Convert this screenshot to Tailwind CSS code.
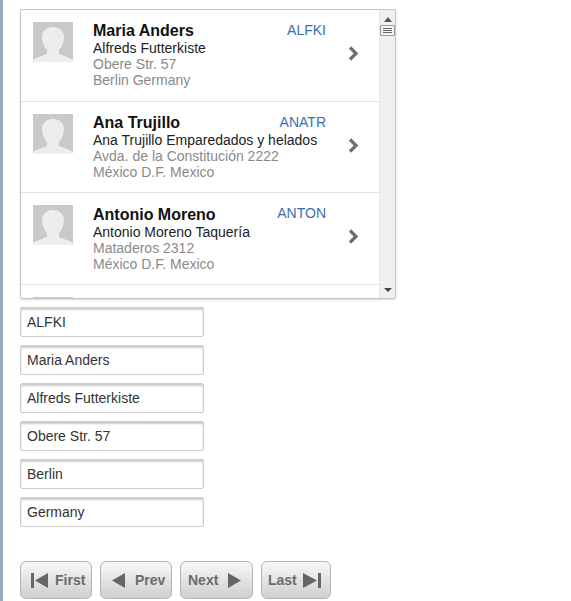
<!DOCTYPE html>
<html lang="en">
<head>
    <meta charset="UTF-8">
    <title>Customers</title>
    <script src="https://cdn.jsdelivr.net/npm/@tailwindcss/browser@4"></script>
</head>
<body class="bg-white overflow-hidden">
<div class="h-[601px] w-[571px] overflow-hidden border-l-[3px] border-[#9aa9bd] pl-[17px] pt-[9px] font-['Liberation_Sans',Arial,sans-serif]">

    <!-- list -->
    <div class="flex h-[290px] w-[376px] rounded-[2px] border border-[#c4c4c4] shadow-[0_1px_2px_rgba(0,0,0,0.15)] overflow-hidden">
        <div class="w-[358px] shrink-0 overflow-hidden">

            <div class="flex h-[92px] border-b border-[#e2e2e2] pl-[12px] pt-[12px]">
                <svg class="w-[40px] h-[40px] shrink-0" viewBox="0 0 40 40"><rect width="40" height="40" fill="#c9c9c9"/><path d="M0 40v-2c4-3 10-4 14-6v-4c-3-3-5-8-5-13 0-6 5-10 11-10s11 4 11 10c0 5-2 10-5 13v4c4 2 10 3 14 6v2z" fill="#ededed"/></svg>
                <div class="ml-[20px] w-[200px] shrink-0">
                    <div class="text-[16px] leading-[18px] font-bold text-[#111]">Maria Anders</div>
                    <div class="text-[14px] leading-[16px] text-[#222]">Alfreds Futterkiste</div>
                    <div class="text-[14px] leading-[16px] text-[#8a8a8a]">Obere Str. 57</div>
                    <div class="text-[14px] leading-[16px] text-[#8a8a8a]">Berlin Germany</div>
                </div>
                <div class="w-[33px] text-[14px] leading-[16px] text-[#3a6fb5] whitespace-nowrap flex justify-end">ALFKI</div>
                <svg class="w-[11px] h-[15px] ml-[22px] mt-[24px]" viewBox="0 0 11 15"><path d="M2 1.500 8 7.500 2 13.500" fill="none" stroke="#6e6e6e" stroke-width="3.2"/></svg>
            </div>

            <div class="flex h-[91px] border-b border-[#e2e2e2] pl-[12px] pt-[12px]">
                <svg class="w-[40px] h-[40px] shrink-0" viewBox="0 0 40 40"><rect width="40" height="40" fill="#c9c9c9"/><path d="M0 40v-2c4-3 10-4 14-6v-4c-3-3-5-8-5-13 0-6 5-10 11-10s11 4 11 10c0 5-2 10-5 13v4c4 2 10 3 14 6v2z" fill="#ededed"/></svg>
                <div class="ml-[20px] w-[200px] shrink-0">
                    <div class="text-[16px] leading-[18px] font-bold text-[#111]">Ana Trujillo</div>
                    <div class="text-[14px] leading-[16px] text-[#222] whitespace-nowrap">Ana Trujillo Emparedados y helados</div>
                    <div class="text-[14px] leading-[16px] text-[#8a8a8a] whitespace-nowrap">Avda. de la Constitución 2222</div>
                    <div class="text-[14px] leading-[16px] text-[#8a8a8a]">México D.F. Mexico</div>
                </div>
                <div class="w-[33px] text-[14px] leading-[16px] text-[#3a6fb5] whitespace-nowrap flex justify-end">ANATR</div>
                <svg class="w-[11px] h-[15px] ml-[22px] mt-[24px]" viewBox="0 0 11 15"><path d="M2 1.500 8 7.500 2 13.500" fill="none" stroke="#6e6e6e" stroke-width="3.2"/></svg>
            </div>

            <div class="flex h-[92px] border-b border-[#e2e2e2] pl-[12px] pt-[12px]">
                <svg class="w-[40px] h-[40px] shrink-0" viewBox="0 0 40 40"><rect width="40" height="40" fill="#c9c9c9"/><path d="M0 40v-2c4-3 10-4 14-6v-4c-3-3-5-8-5-13 0-6 5-10 11-10s11 4 11 10c0 5-2 10-5 13v4c4 2 10 3 14 6v2z" fill="#ededed"/></svg>
                <div class="ml-[20px] w-[200px] shrink-0 pt-[1px]">
                    <div class="text-[16px] leading-[18px] font-bold text-[#111]">Antonio Moreno</div>
                    <div class="text-[14px] leading-[16px] text-[#222] whitespace-nowrap">Antonio Moreno Taquería</div>
                    <div class="text-[14px] leading-[16px] text-[#8a8a8a]">Mataderos 2312</div>
                    <div class="text-[14px] leading-[16px] text-[#8a8a8a]">México D.F. Mexico</div>
                </div>
                <div class="w-[33px] text-[14px] leading-[16px] text-[#3a6fb5] whitespace-nowrap flex justify-end">ANTON</div>
                <svg class="w-[11px] h-[15px] ml-[22px] mt-[24px]" viewBox="0 0 11 15"><path d="M2 1.500 8 7.500 2 13.500" fill="none" stroke="#6e6e6e" stroke-width="3.2"/></svg>
            </div>

            <div class="pl-[12px] pt-[12px]"><div class="w-[40px] h-[40px] bg-[#c9c9c9]"></div></div>
        </div>

        <!-- scrollbar -->
        <div class="w-[16px] shrink-0 bg-[#f0f0f0] border-l border-[#e6e6e6] flex flex-col items-center">
            <svg class="w-[8px] h-[5px] mt-[7px]" viewBox="0 0 8 5"><path d="M4 0 8 5H0z" fill="#555"/></svg>
            <div class="w-[15px] h-[11px] mt-[3px] flex flex-col justify-center gap-[1px] rounded-[1px] border border-[#9a9a9a] bg-[#f4f4f4] px-[2px]">
                <div class="h-px bg-[#666]"></div>
                <div class="h-px bg-[#666]"></div>
                <div class="h-px bg-[#666]"></div>
            </div>
            <svg class="w-[8px] h-[4px] mt-auto mb-[6px]" viewBox="0 0 8 4"><path d="M0 0H8L4 4z" fill="#444"/></svg>
        </div>
    </div>

    <!-- fields -->
    <div class="mt-[8px] flex flex-col gap-[8px] w-[184px]">
        <input value="ALFKI" class="h-[30px] w-full rounded-[2px] border border-[#cccccc] shadow-[inset_0_2px_2px_rgba(0,0,0,0.2)] px-[6px] text-[14px] text-[#333] bg-white">
        <input value="Maria Anders" class="h-[30px] w-full rounded-[2px] border border-[#cccccc] shadow-[inset_0_2px_2px_rgba(0,0,0,0.2)] px-[6px] text-[14px] text-[#333] bg-white">
        <input value="Alfreds Futterkiste" class="h-[30px] w-full rounded-[2px] border border-[#cccccc] shadow-[inset_0_2px_2px_rgba(0,0,0,0.2)] px-[6px] text-[14px] text-[#333] bg-white">
        <input value="Obere Str. 57" class="h-[30px] w-full rounded-[2px] border border-[#cccccc] shadow-[inset_0_2px_2px_rgba(0,0,0,0.2)] px-[6px] text-[14px] text-[#333] bg-white">
        <input value="Berlin" class="h-[30px] w-full rounded-[2px] border border-[#cccccc] shadow-[inset_0_2px_2px_rgba(0,0,0,0.2)] px-[6px] text-[14px] text-[#333] bg-white">
        <input value="Germany" class="h-[30px] w-full rounded-[2px] border border-[#cccccc] shadow-[inset_0_2px_2px_rgba(0,0,0,0.2)] px-[6px] text-[14px] text-[#333] bg-white">
    </div>

    <!-- pager -->
    <div class="mt-[34px] flex gap-[8px]">
        <button class="w-[72px] h-[38px] flex items-center pl-[10px] gap-[7px] rounded-[6px] border border-[#b5b5b5] bg-gradient-to-b from-[#f8f8f8] to-[#cfcfcf] text-[14px] font-bold text-[#6b6b6b]">
            <svg class="w-[17px] h-[15px]" viewBox="0 0 17 15"><path d="M0 0h3v15H0zM4 7.500 17 0v15z" fill="#666"/></svg>First
        </button>
        <button class="w-[72px] h-[38px] flex items-center pl-[11px] gap-[10px] rounded-[6px] border border-[#b5b5b5] bg-gradient-to-b from-[#f8f8f8] to-[#cfcfcf] text-[14px] font-bold text-[#6b6b6b]">
            <svg class="w-[13px] h-[15px]" viewBox="0 0 13 15"><path d="M0 7.500 13 0v15z" fill="#666"/></svg>Prev
        </button>
        <button class="w-[73px] h-[38px] flex items-center pl-[7px] gap-[10px] rounded-[6px] border border-[#b5b5b5] bg-gradient-to-b from-[#f8f8f8] to-[#cfcfcf] text-[14px] font-bold text-[#6b6b6b]">
            Next<svg class="w-[13px] h-[15px]" viewBox="0 0 13 15"><path d="M13 7.500 0 0v15z" fill="#666"/></svg>
        </button>
        <button class="w-[70px] h-[38px] flex items-center pl-[6px] gap-[6px] rounded-[6px] border border-[#b5b5b5] bg-gradient-to-b from-[#f8f8f8] to-[#cfcfcf] text-[14px] font-bold text-[#6b6b6b]">
            Last<svg class="w-[18px] h-[15px]" viewBox="0 0 18 15"><path d="M15 0h3v15h-3zM14 7.500 0 0v15z" fill="#666"/></svg>
        </button>
    </div>
</div>
</body>
</html>
